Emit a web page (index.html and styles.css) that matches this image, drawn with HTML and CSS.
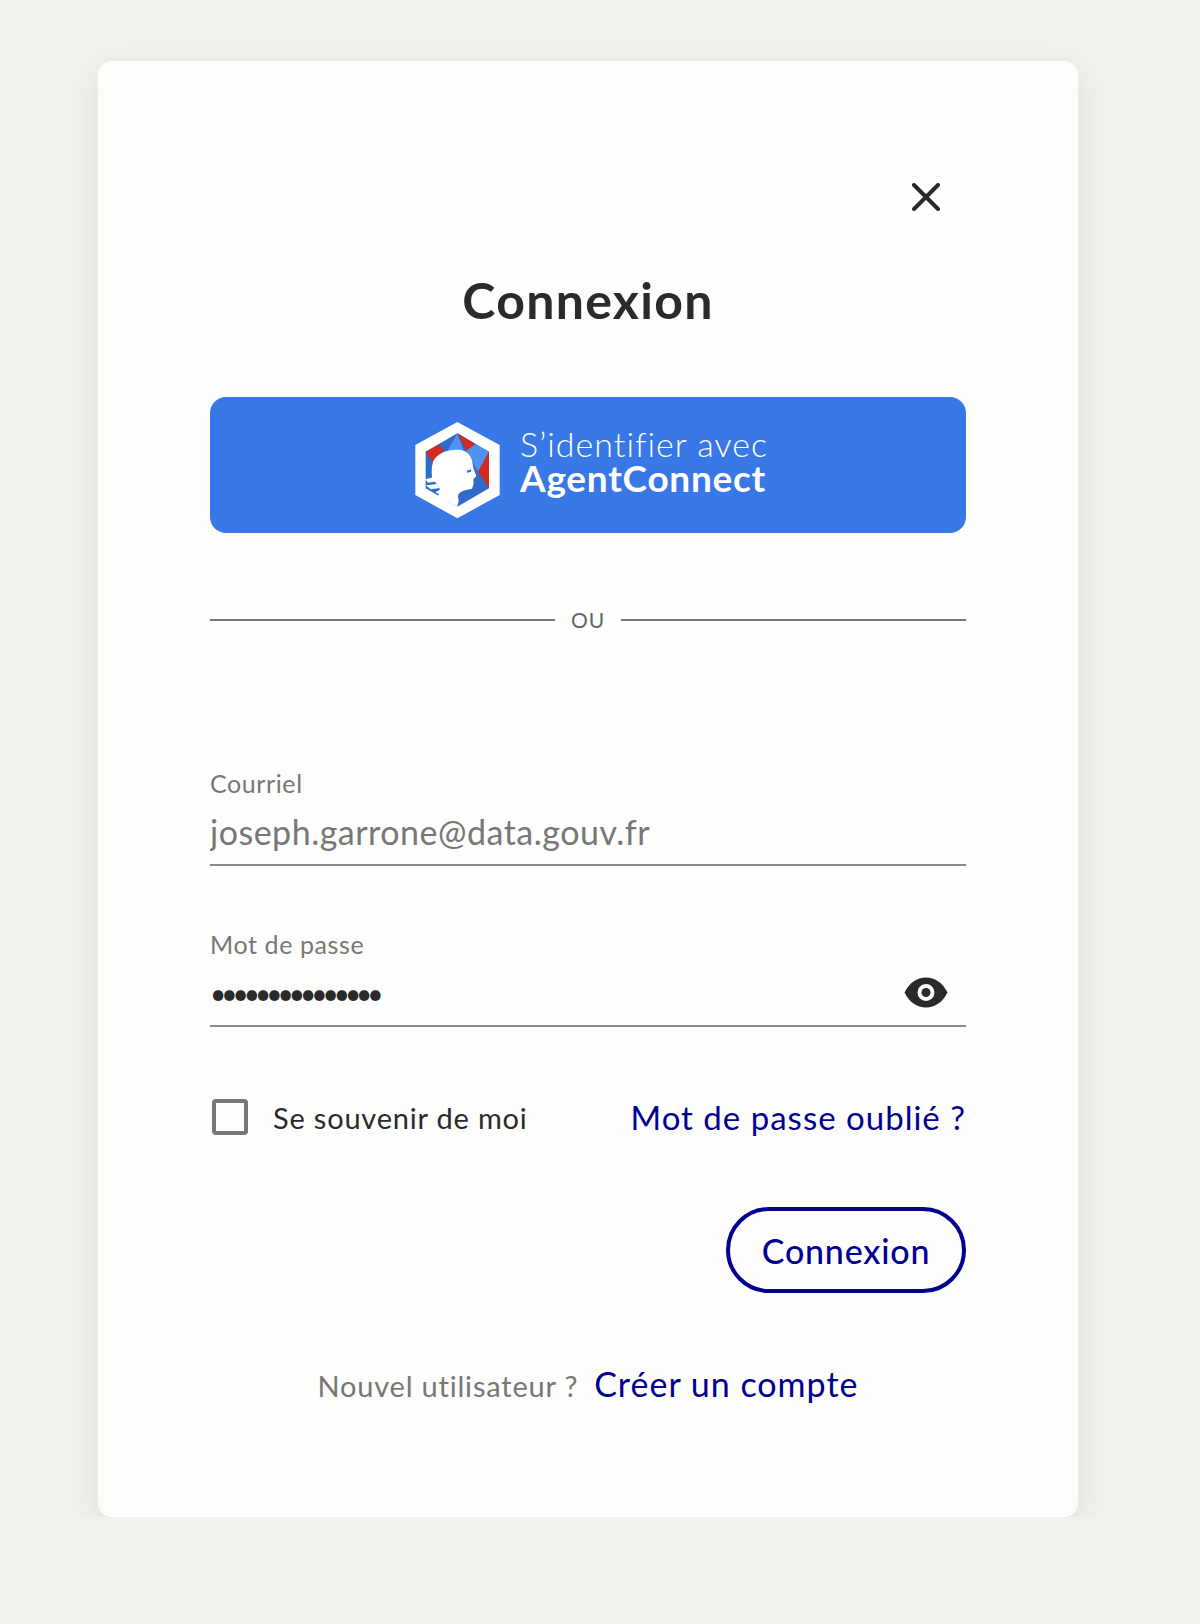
FILE: index.html
```html
<!DOCTYPE html>
<html lang="fr">
<head>
    <meta charset="UTF-8">
    <title>Connexion</title>
    <link rel="stylesheet" href="styles.css">
</head>
<body>
    <main class="card">
        <div class="close-row">
            <button class="close" type="button" aria-label="Fermer">
                <svg width="28" height="28" viewBox="0 0 28 28"><path d="M2 2L26 26M26 2L2 26" stroke="#2a2a2a" stroke-width="4" stroke-linecap="round"/></svg>
            </button>
        </div>

        <h1 class="title">Connexion</h1>

        <a class="agent-btn" href="#">
            <svg class="agent-logo" width="120" height="110" viewBox="0 0 360 330">
                <path fill="#fff" d="M178 36L305 105V255L178 325L52 255V105Z"/>
                <path fill="#2f6bc8" d="M178 70L273 125V235L178 290L83 235V125Z"/>
                <path fill="#d12a20" d="M83 125L121 104L138 120L105 160Z"/>
                <path fill="#d12a20" d="M178 70L233 102L205 122Z"/>
                <path fill="#5092f0" d="M178 70L196 120L150 120Z"/>
                <path fill="#5092f0" d="M233 102L273 125L240 185L205 122Z"/>
                <path fill="#d12a20" d="M273 125V235L240 185Z"/>
                <path fill="#fff" d="M105 155C116 130 150 116 190 120C208 124 220 138 223 156L226 174L235 198L226 208L227 222L222 236L204 240C190 243 180 250 180 260L182 272L178 290L120 258C132 240 124 226 104 210C100 192 100 172 105 155Z"/>
                <path fill="#2f6bc8" d="M206 182L220 178L218 186L208 188Z"/>
                <path fill="#fff" d="M82 208L110 200L118 214L90 218ZM84 226L118 222L124 234L98 238ZM112 246L134 236L128 256Z"/>
            </svg>
            <span class="agent-text">
                <span class="agent-small">S’identifier avec</span>
                <strong class="agent-big">AgentConnect</strong>
            </span>
        </a>

        <div class="separator"><span>OU</span></div>

        <form class="login-form">
            <label class="field">
                <span class="field-label">Courriel</span>
                <span class="field-line">
                    <input class="field-input" type="text" value="joseph.garrone@data.gouv.fr">
                </span>
            </label>

            <label class="field field-pass">
                <span class="field-label">Mot de passe</span>
                <span class="field-line">
                    <input class="field-input pass-input" type="password" value="123456789012345">
                    <svg class="eye" width="44" height="31" viewBox="0 0 44 31">
                        <path fill="#2a2a2a" fill-rule="evenodd" d="M0.5 15.5C5 6 13 0.5 22 0.5S39 6 43.5 15.5C39 25 31 30.5 22 30.5S5 25 0.5 15.5ZM22 7A8.5 8.5 0 1 0 22 24A8.5 8.5 0 1 0 22 7Z"/>
                        <circle cx="22" cy="15.5" r="4.5" fill="#2a2a2a"/>
                    </svg>
                </span>
            </label>

            <div class="options">
                <label class="remember">
                    <span class="checkbox"></span>
                    <span>Se souvenir de moi</span>
                </label>
                <a class="link" href="#">Mot de passe oublié ?</a>
            </div>

            <div class="submit-row">
                <button class="submit" type="button">Connexion</button>
            </div>
        </form>

        <p class="signup">
            <span>Nouvel utilisateur ?</span>
            <a class="link link-big" href="#">Créer un compte</a>
        </p>
    </main>
</body>
</html>
```

FILE: styles.css
```css
body {
    margin: 0;
    background: #f1f0eb;
    font-family: 'Lato', 'Liberation Sans', sans-serif;
    color: #2a2a2a;
}

.card {
    box-sizing: border-box;
    width: 980px;
    height: 1456px;
    margin: 61px 0 0 98px;
    padding: 122px 112px 0;
    background: #fdfdfb;
    border-radius: 14px;
    box-shadow: 0 8px 32px rgba(0, 0, 0, 0.07);
}

.close-row {
    display: flex;
    justify-content: flex-end;
    padding-right: 26px;
}

.close {
    display: flex;
    padding: 0;
    border: 0;
    background: none;
}

.title {
    margin: 59px 0 0;
    text-align: center;
    font-size: 50px;
    line-height: 60px;
    font-weight: 700;
    letter-spacing: 1.3px;
    color: #2a2a2a;
}

.agent-btn {
    display: flex;
    justify-content: center;
    align-items: center;
    height: 136px;
    margin-top: 67px;
    padding-right: 8px;
    background: #3878e6;
    border-radius: 16px;
    color: #fff;
    text-decoration: none;
}

.agent-logo {
    margin-left: -2px;
}

.agent-text {
    display: flex;
    flex-direction: column;
    margin: 0 0 11px 2px;
}

.agent-small {
    font-size: 34px;
    line-height: 36px;
    font-weight: 300;
    letter-spacing: 1px;
}

.agent-big {
    font-size: 37px;
    line-height: 32px;
    font-weight: 700;
    letter-spacing: 0.7px;
}

.separator {
    display: flex;
    align-items: center;
    gap: 16px;
    margin-top: 72px;
    font-size: 21px;
    line-height: 30px;
    color: #666;
    letter-spacing: 1px;
}

.separator::before,
.separator::after {
    content: '';
    flex: 1;
    height: 2px;
    background: #777;
}

.login-form {
    margin-top: 132px;
}

.field {
    display: block;
}

.field-pass {
    margin-top: 62px;
}

.field-label {
    display: block;
    font-size: 25px;
    line-height: 32px;
    color: #777;
    letter-spacing: 0.6px;
}

.field-line {
    display: flex;
    align-items: center;
    height: 65px;
    border-bottom: 2px solid #8a8a8a;
}

.field-input {
    flex: 1;
    min-width: 0;
    padding: 0;
    border: 0;
    outline: 0;
    background: none;
    font-family: inherit;
    font-size: 34px;
    letter-spacing: 0.5px;
    color: #777;
}

.pass-input {
    font-size: 28px;
    letter-spacing: -5px;
    color: #2a2a2a;
}

.eye {
    margin-right: 18px;
}

.options {
    display: flex;
    justify-content: space-between;
    align-items: center;
    margin-top: 70px;
}

.remember {
    display: flex;
    align-items: center;
    gap: 25px;
    margin-left: 2px;
    font-size: 29px;
    letter-spacing: 0.8px;
}

.checkbox {
    box-sizing: border-box;
    width: 36px;
    height: 36px;
    border: 4px solid #777;
    border-radius: 4px;
}

.link {
    font-size: 33px;
    color: #000091;
    text-decoration: none;
    letter-spacing: 1px;
}

.link-big {
    font-size: 34px;
}

.submit-row {
    display: flex;
    justify-content: flex-end;
    margin-top: 70px;
}

.submit {
    box-sizing: border-box;
    width: 240px;
    height: 86px;
    border: 4px solid #000091;
    border-radius: 43px;
    background: none;
    font-family: inherit;
    font-size: 34px;
    font-weight: 500;
    letter-spacing: 0.8px;
    color: #000091;
}

.signup {
    display: flex;
    justify-content: center;
    align-items: baseline;
    gap: 16px;
    margin: 70px 0 0;
    font-size: 29px;
    color: #777;
    letter-spacing: 0.8px;
}
```
